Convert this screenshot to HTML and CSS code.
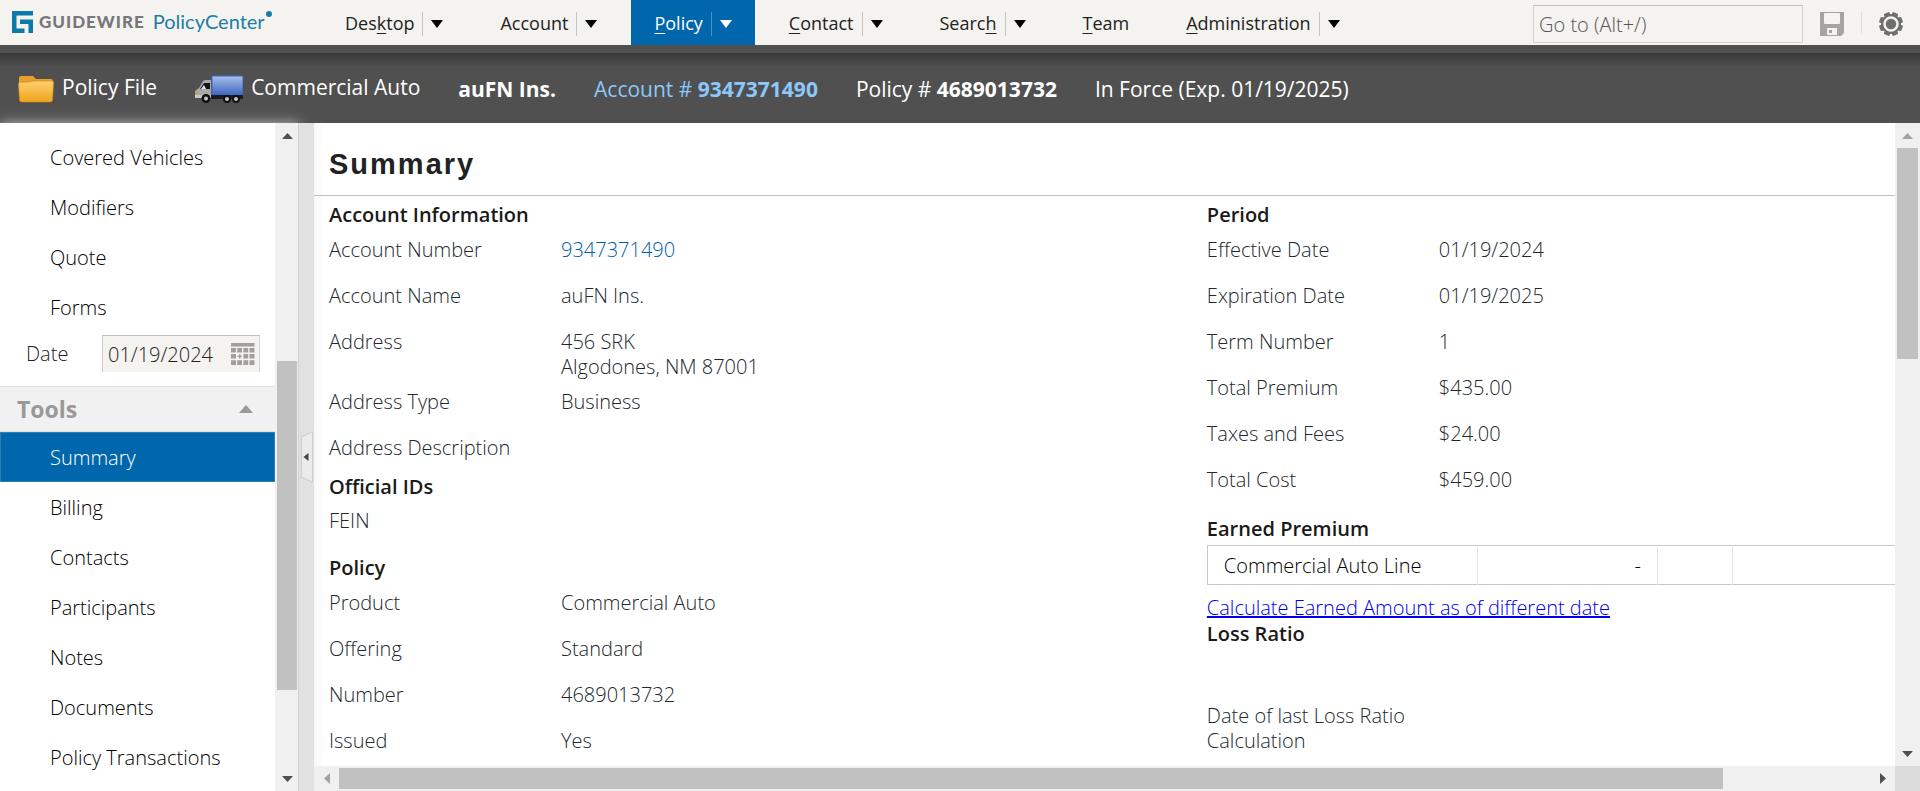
FILE: index.html
```html
<!DOCTYPE html>
<html lang="en">
<head>
<meta charset="utf-8">
<title>Guidewire PolicyCenter - Summary</title>
<link rel="stylesheet" href="styles.css">
</head>
<body>
<div class="app">
  <header class="topbar">
    <a class="brand" href="#">
      <svg class="brand-mark" viewBox="0 0 21 22"><path d="M0 0H21V4.500H4.500V17.500H12.500V22H0ZM8 8.500H21V22H16.500V13H8Z" fill="#0b7ba8"/></svg>
      <span class="brand-name">GUIDEWIRE</span>
      <span class="brand-product">PolicyCenter<span class="brand-dot"></span></span>
    </a>
    <nav class="tabs">
      <div class="tab"><a href="#">Des<u>k</u>top</a><button class="drop" aria-label="Desktop menu"><span class="caret"></span></button></div>
      <div class="tab"><a href="#">Account</a><button class="drop" aria-label="Account menu"><span class="caret"></span></button></div>
      <div class="tab tab-active"><a href="#"><u>P</u>olicy</a><button class="drop" aria-label="Policy menu"><span class="caret"></span></button></div>
      <div class="tab"><a href="#"><u>C</u>ontact</a><button class="drop" aria-label="Contact menu"><span class="caret"></span></button></div>
      <div class="tab"><a href="#">Searc<u>h</u></a><button class="drop" aria-label="Search menu"><span class="caret"></span></button></div>
      <div class="tab"><a href="#"><u>T</u>eam</a></div>
      <div class="tab"><a href="#"><u>A</u>dministration</a><button class="drop" aria-label="Administration menu"><span class="caret"></span></button></div>
    </nav>
    <div class="tools">
      <input class="goto" type="text" placeholder="Go to (Alt+/)" aria-label="Go to">
      <button class="icon-btn" aria-label="Save">
        <svg width="24" height="24" viewBox="0 0 24 24"><path d="M0 0H24V21L21 24H0Z" fill="#a4a4a2"/><rect x="4" y="1" width="16" height="11" rx="1" fill="#f4f3ef"/><rect x="7" y="16" width="10" height="7" fill="#f4f3ef"/><rect x="9" y="18" width="3" height="3" fill="#a4a4a2"/></svg>
      </button>
      <span class="sep"></span>
      <button class="icon-btn" aria-label="Settings">
        <svg width="24" height="24" viewBox="-12 -12 24 24"><g fill="#6f6f6d"><rect x="-12" y="-3" width="24" height="6" rx="1" transform="rotate(22.500)"/><rect x="-12" y="-3" width="24" height="6" rx="1" transform="rotate(67.500)"/><rect x="-12" y="-3" width="24" height="6" rx="1" transform="rotate(112.500)"/><rect x="-12" y="-3" width="24" height="6" rx="1" transform="rotate(157.500)"/><circle r="10"/></g><circle r="6.500" fill="none" stroke="#f4f3ef" stroke-width="2.400"/></svg>
      </button>
    </div>
  </header>

  <div class="infobar">
    <a class="info info-file" href="#">
      <svg width="36" height="28" viewBox="0 0 36 28"><defs><linearGradient id="fold" x1="0" y1="0" x2="0" y2="1"><stop offset="0" stop-color="#ffd070"/><stop offset="1" stop-color="#f0a41c"/></linearGradient></defs><path d="M1 3Q1 1 3 1H15L18 4H33Q35 4 35 6V14H1Z" fill="#e9a02c"/><path d="M2 7Q9 8 16 6H34Q36 6 35.500 9L34.500 25Q34.500 27 32 27H4Q1.500 27 1.500 25L0.500 9Q0.500 7 2 7Z" fill="url(#fold)" stroke="#cf8a14" stroke-width=".6"/></svg>
      <span>Policy File</span>
    </a>
    <a class="info info-line" href="#">
      <svg width="48" height="28" viewBox="0 0 48 28"><defs><linearGradient id="box" x1="0" y1="0" x2="0" y2="1"><stop offset="0" stop-color="#a9c0ee"/><stop offset="1" stop-color="#3d66c0"/></linearGradient></defs><rect x="17" y="1" width="31" height="19" fill="url(#box)" stroke="#3a68c8"/><path d="M8 6Q9 5 11 5H16V22H0V16L4 13Z" fill="#a9a9a9"/><path d="M9 8H15V14H5Z" fill="#141414"/><path d="M9 10L6 14H11Z" fill="#e8e8e8"/><path d="M16 20H48V24H16Z" fill="#1c1c1c"/><path d="M0 20H16V23H0Z" fill="#c8c8c8"/><rect x="0" y="17" width="3" height="2" fill="#ee8a2a"/><g fill="#111"><circle cx="11" cy="23.500" r="4.500"/><circle cx="32" cy="24" r="4"/><circle cx="41" cy="24" r="4"/></g><g fill="#c4c4c4"><circle cx="11" cy="23.500" r="2"/><circle cx="32" cy="24" r="2"/><circle cx="41" cy="24" r="2"/></g></svg>
      <span>Commercial Auto</span>
    </a>
    <div class="info-details">
      <b>auFN Ins.</b>
      <a class="info-account" href="#">Account # <b>9347371490</b></a>
      <span>Policy # <b>4689013732</b></span>
      <span>In Force (Exp. 01/19/2025)</span>
    </div>
  </div>

  <div class="body">
    <aside class="sidebar">
      <div class="side-content">
        <nav class="side-list">
          <a href="#">Covered Vehicles</a>
          <a href="#">Modifiers</a>
          <a href="#">Quote</a>
          <a href="#">Forms</a>
        </nav>
        <div class="date-row">
          <label for="asof">Date</label>
          <div class="date-box">
            <input id="asof" type="text" value="01/19/2024">
            <button class="icon-btn" aria-label="Pick a date">
              <svg width="24" height="23" viewBox="0 0 24 23" fill="#a09f9d"><path d="M0 0H23.500V3.500H0ZM0 5H5V9.500H0ZM6.200 5H11V9.500H6.200ZM12.400 5H17.200V9.500H12.400ZM18.500 5H23.500V9.500H18.500ZM0 11H5V15.500H0ZM12.400 11H17.200V15.500H12.400ZM18.500 11H23.500V15.500H18.500ZM0 17.300H5V22H0ZM6.200 17.300H11V22H6.200ZM12.400 17.300H17.200V22H12.400ZM18.500 17.300H23.500V22H18.500ZM8 11.200H9.500V12.700H11V14H9.500V15.500H8V14H6.400V12.700H8Z"/></svg>
            </button>
          </div>
        </div>
        <button class="group"><span>Tools</span><span class="fold-caret"></span></button>
        <nav class="side-list">
          <a class="current" href="#">Summary</a>
          <a href="#">Billing</a>
          <a href="#">Contacts</a>
          <a href="#">Participants</a>
          <a href="#">Notes</a>
          <a href="#">Documents</a>
          <a href="#">Policy Transactions</a>
        </nav>
      </div>
      <div class="scroll scroll-v scroll-side">
        <span class="arrow"><svg width="11" height="6" viewBox="0 0 11 6"><path d="M0 6L5.500 0L11 6Z"/></svg></span>
        <span class="track track-before"></span><span class="thumb"></span><span class="track track-after"></span>
        <span class="arrow"><svg width="11" height="6" viewBox="0 0 11 6"><path d="M0 0L5.500 6L11 0Z"/></svg></span>
      </div>
    </aside>

    <div class="splitter">
      <button class="collapse" aria-label="Collapse sidebar">
        <svg width="12" height="52" viewBox="0 0 12 52"><path d="M.5 6L11.500 .8V51.200L.5 46Z" fill="#ebebeb" stroke="#cdcdcd"/><path d="M7.500 22V30L2.500 26Z" fill="#444"/></svg>
      </button>
    </div>

    <main class="main">
      <div class="page">
        <h1>Summary</h1>
        <div class="columns">
          <div class="column">
            <section>
              <h2>Account Information</h2>
              <dl>
                <div><dt>Account Number</dt><dd><a href="#">9347371490</a></dd></div>
                <div><dt>Account Name</dt><dd>auFN Ins.</dd></div>
                <div><dt>Address</dt><dd>456 SRK<br>Algodones, NM 87001</dd></div>
                <div><dt>Address Type</dt><dd>Business</dd></div>
                <div><dt>Address Description</dt><dd></dd></div>
              </dl>
            </section>
            <section class="tight">
              <h2>Official IDs</h2>
              <dl>
                <div><dt>FEIN</dt><dd></dd></div>
              </dl>
            </section>
            <section>
              <h2>Policy</h2>
              <dl>
                <div><dt>Product</dt><dd>Commercial Auto</dd></div>
                <div><dt>Offering</dt><dd>Standard</dd></div>
                <div><dt>Number</dt><dd>4689013732</dd></div>
                <div><dt>Issued</dt><dd>Yes</dd></div>
              </dl>
            </section>
          </div>
          <div class="column">
            <section>
              <h2>Period</h2>
              <dl>
                <div><dt>Effective Date</dt><dd>01/19/2024</dd></div>
                <div><dt>Expiration Date</dt><dd>01/19/2025</dd></div>
                <div><dt>Term Number</dt><dd>1</dd></div>
                <div><dt>Total Premium</dt><dd>$435.00</dd></div>
                <div><dt>Taxes and Fees</dt><dd>$24.00</dd></div>
                <div><dt>Total Cost</dt><dd>$459.00</dd></div>
              </dl>
            </section>
            <section class="earned">
              <h2>Earned Premium</h2>
              <table class="premium">
                <tr><td class="c-line">Commercial Auto Line</td><td class="c-amount">-</td><td class="c-gap"></td><td></td></tr>
              </table>
              <a class="calc" href="#">Calculate Earned Amount as of different date</a>
            </section>
            <section class="tight">
              <h2>Loss Ratio</h2>
              <dl class="loss">
                <div><dt>Date of last Loss Ratio Calculation</dt><dd></dd></div>
              </dl>
            </section>
          </div>
        </div>
      </div>
      <div class="scroll scroll-v scroll-main">
        <span class="arrow arrow-dim"><svg width="11" height="6" viewBox="0 0 11 6"><path d="M0 6L5.500 0L11 6Z"/></svg></span>
        <span class="thumb"></span><span class="track track-after"></span>
        <span class="arrow"><svg width="11" height="6" viewBox="0 0 11 6"><path d="M0 0L5.500 6L11 0Z"/></svg></span>
      </div>
      <div class="scroll scroll-h">
        <span class="arrow arrow-dim"><svg width="6" height="11" viewBox="0 0 6 11"><path d="M6 0L0 5.500L6 11Z"/></svg></span>
        <span class="thumb"></span><span class="track track-after"></span>
        <span class="arrow"><svg width="6" height="11" viewBox="0 0 6 11"><path d="M0 0L6 5.500L0 11Z"/></svg></span>
      </div>
      <div class="corner"></div>
    </main>
  </div>
</div>
</body>
</html>
```
FILE: styles.css
```css
* { box-sizing: border-box; }

body {
  margin: 0;
  font-family: "Open Sans", "Noto Sans", sans-serif;
  font-size: 20px;
  font-weight: 300;
  line-height: 25px;
  color: #000;
}

a { color: inherit; text-decoration: none; }
button { padding: 0; border: 0; background: none; font: inherit; color: inherit; }
svg { display: block; }

.app { display: flex; flex-direction: column; height: 100vh; overflow: hidden; }

/* Top bar */
.topbar { display: flex; height: 45px; flex: none; background: #f4f3ef; }
.brand { display: flex; align-items: center; width: 322px; padding: 0 0 2px 12px; gap: 6px; flex: none; }
.brand-mark { width: 21px; height: 22px; }
.brand-name { font-family: Lato, sans-serif; font-weight: 900; font-size: 17px; letter-spacing: 1px; color: #77777a; }
.brand-product { display: flex; margin-left: 2px; font-family: Lato, sans-serif; font-weight: 400; font-size: 20px; color: #1b7ea6; }
.brand-dot { width: 6px; height: 6px; margin: 2px 0 0 1px; border-radius: 3px; background: #1b7ea6; }
.tabs { display: flex; gap: 11px; font-size: 18px; font-weight: 400; color: #222; }
.tab { display: flex; align-items: center; padding: 2px 23px 0; }
.tab u { text-underline-offset: 3px; }
.tab-active { background: #0067ac; color: #fff; }
.drop { display: flex; align-items: center; height: 24px; margin-left: 8px; padding-left: 8px; border-left: 1px solid #c4c4c1; }
.tab-active .drop { border-color: #4a91c4; }
.caret { border: 6px solid transparent; border-top: 8px solid #000; border-bottom: 0; }
.tab-active .caret { border-top-color: #fff; }
.tools { display: flex; align-items: center; margin-left: auto; padding-right: 17px; gap: 17px; }
.goto { width: 270px; height: 38px; margin-top: 3px; padding: 0 5px; border: 1px solid #d2d2d0; border-top-color: #bfbfbd; background: transparent; font: inherit; color: #222; }
.goto::placeholder { color: #555; opacity: 1; }
.icon-btn { width: 24px; height: 24px; flex: none; margin-top: 3px; }
.sep { width: 1px; height: 21px; background: #dcdcda; }

/* Policy info bar */
.infobar {
  display: flex; align-items: center; flex: none; height: 78px; padding: 3px 18px 0;
  border-top: 8px solid #505050;
  background: linear-gradient(#383838, #505050 14px);
  color: #fff; font-size: 21px; font-weight: 400;
}
.info { display: flex; align-items: center; gap: 8px; margin-bottom: 2px; }
.info span { margin-bottom: 2px; }
.info-line { margin-left: 38px; }
.info-details { display: flex; gap: 38px; margin-left: 38px; }
.info-account { color: #8cc8fa; }

/* Body */
.body { display: flex; flex: 1; min-height: 0; }
.sidebar { display: flex; width: 299px; flex: none; background: #fff; box-shadow: 0 0 12px #bbb; }
.side-content { flex: 1; min-width: 0; padding-top: 9px; overflow: hidden; }
.side-list { display: flex; flex-direction: column; }
.side-list a { display: flex; align-items: center; height: 50px; padding-left: 50px; }
.side-list .current { background: #0067ac; border: 1px solid #2a7fb9; padding-left: 49px; color: #fff; }
.date-row { display: flex; align-items: center; padding: 3px 15px 14px 26px; color: #222; }
.date-row label { width: 76px; flex: none; }
.date-box { display: flex; flex: 1; min-width: 0; align-items: center; height: 37px; padding: 0 4px 0 5px; border: 1px solid #d2d2d0; border-top-color: #bfbfbd; border-bottom: 0; background: #f4f3ef; }
.date-box input { flex: 1; min-width: 0; padding: 0; border: 0; background: none; font: inherit; color: #222; }
.date-box .icon-btn { margin: 0; }
.group { display: flex; align-items: center; justify-content: space-between; width: 100%; height: 46px; padding: 0 22px 0 17px; border: solid #e4e1d4; border-width: 1px 0; background: #f1f1f1; font-size: 23px; font-weight: 700; color: #999; }
.fold-caret { border: 7px solid transparent; border-bottom: 8px solid #999; border-top: 0; }

/* Scroll bars */
.scroll { display: flex; background: #f0f0f0; }
.scroll-v { flex-direction: column; width: 25px; padding: 0 2px; }
.scroll-h { padding: 2px 0; }
.arrow { display: flex; align-items: center; justify-content: center; flex: 0 0 25px; fill: #505050; }
.arrow-dim { fill: #a3a3a3; }
.thumb { background: #c1c1c1; }
.scroll-side { width: 24px; border-right: 1px solid #d0d0d0; padding: 0 1px 0 2px; }
.scroll-side .track-before { flex: 213; }
.scroll-side .thumb { flex: 329; }
.scroll-side .track-after { flex: 76; }
.scroll-main .thumb { flex: 211; }
.scroll-main .track-after { flex: 382; }
.scroll-h .thumb { flex: 1385; }
.scroll-h .track-after { flex: 147; }
.corner { background: #dcdcdc; }

.splitter { display: flex; align-items: center; justify-content: center; width: 15px; flex: none; background: #e1e1e1; z-index: 1; }

/* Main panel */
.main { display: grid; grid-template: minmax(0, 1fr) 25px / minmax(0, 1fr) 25px; flex: 1; min-width: 0; background: #fff; z-index: 1; }
.page { overflow: hidden; background: linear-gradient(90deg, #f7f7f7, #fff 10px); }
h1 { margin: 0; padding: 23px 15px 13px; border-bottom: 1px solid #c0c0c0; font: 700 29px/36px "Liberation Sans", Arial, sans-serif; letter-spacing: 2px; color: #222; }
.columns { display: grid; grid-template-columns: 1fr 1fr; width: 112%; padding: 0 0 0 15px; }
section { padding-top: 8px; }
.tight { padding-top: 0; }
.earned { padding-top: 10px; }
h2 { margin: 0 0 6px; font-size: 20px; line-height: 22px; font-weight: 600; color: #1a1a1a; }
dl { margin: 0; color: #22282c; }
dl div { display: grid; grid-template-columns: 232px 1fr; min-height: 46px; padding: 5px 0; }
dt, dd { margin: 0; }
dd a { color: #0060a8; }
.earned h2, .tight h2 { margin-bottom: 5px; }
.premium { width: 100%; height: 40px; border-collapse: collapse; border: 1px solid #c8c8c8; }
.premium td { padding: 0 16px; border-right: 1px solid #e6e6e6; }
.c-line { width: 270px; }
.c-amount { width: 180px; text-align: right; }
.c-gap { width: 75px; }
.calc { display: block; margin: 10px 0 3px; color: #00e; text-decoration: underline; }
.loss { padding-top: 48px; }
```
